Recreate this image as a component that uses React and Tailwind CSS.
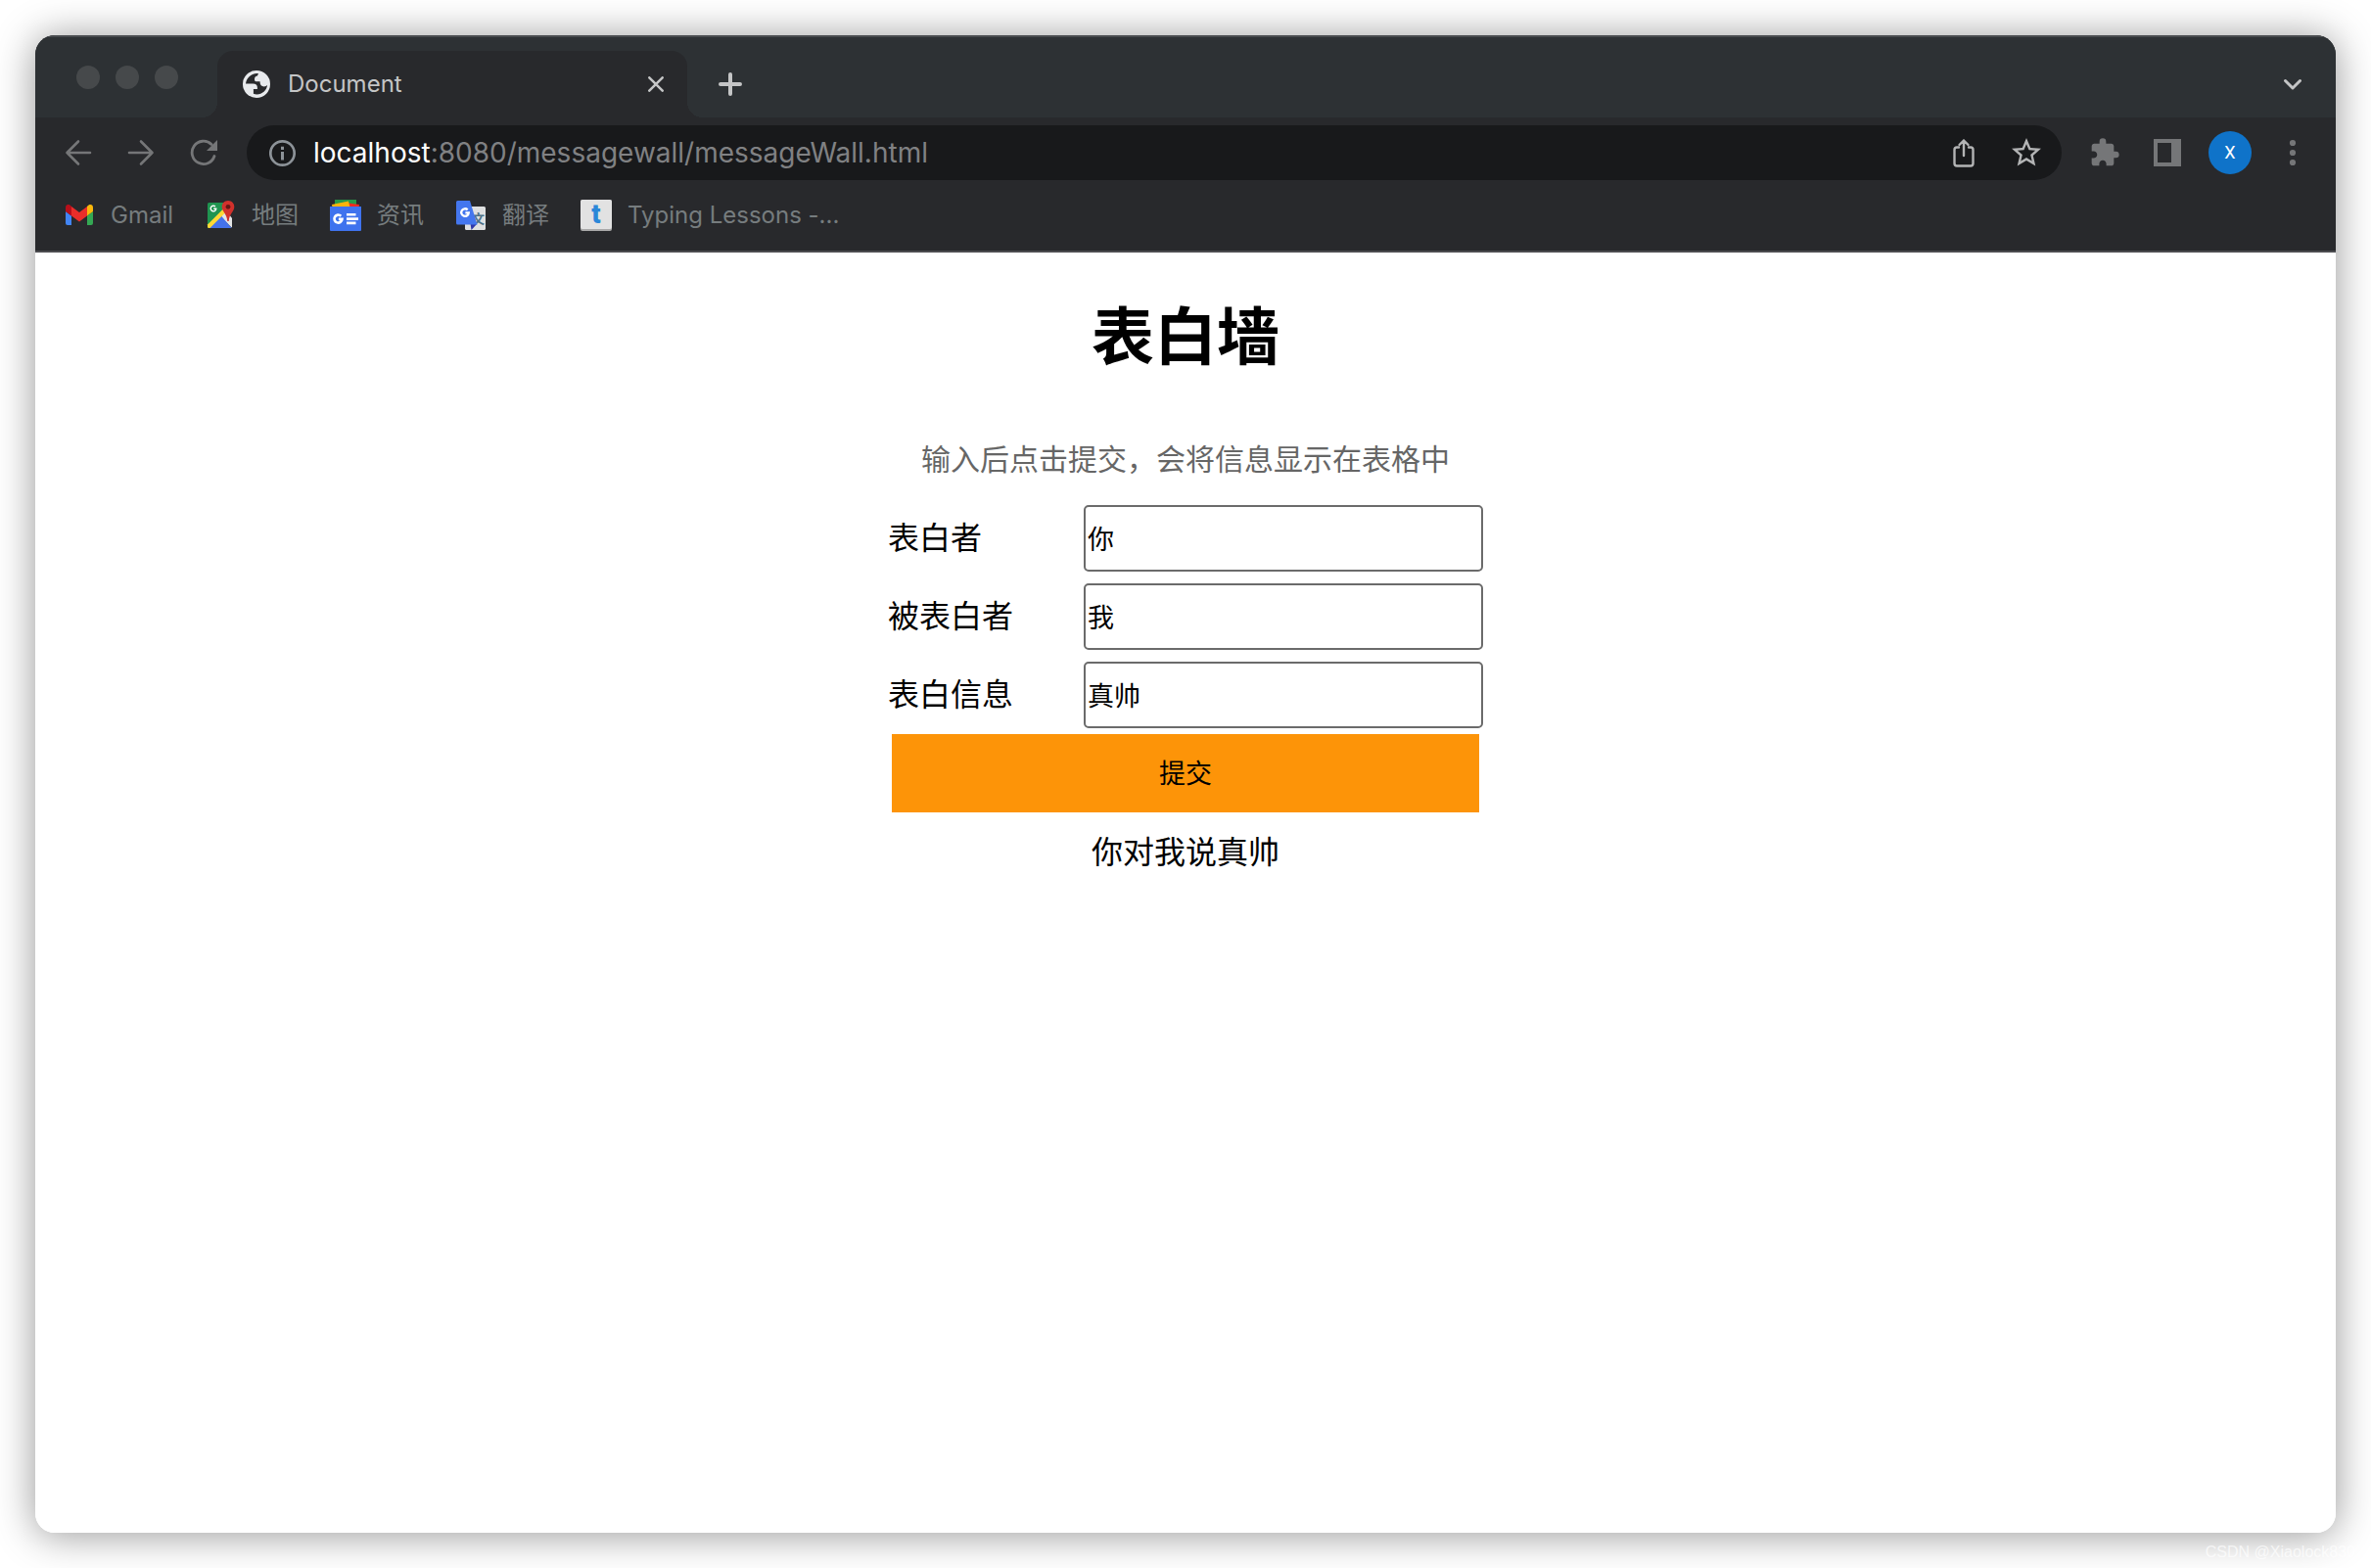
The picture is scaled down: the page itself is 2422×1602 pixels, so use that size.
import { MdExtension, MdStarBorder } from "react-icons/md";

const strokeProps = { fill: "none", stroke: "currentColor", strokeLinecap: "round", strokeLinejoin: "round" };

function GlobeIcon() {
  return (
    <svg className="size-7 shrink-0" viewBox="0 0 28 28" aria-hidden="true">
      <circle cx="14" cy="14" r="14" fill="#e8eaed" />
      <path
        fill="#28292c"
        d="M15.9 3.1C9.8 2.5 3.6 7 3 13.6h7.6c2.700 0 4.300 1.500 4.300 3.900v1.400h-4v4.900c1 .5 2.300.7 3.500.7 5.400 0 10.100-4.100 10.700-9.700-.8 1-2 1.600-3.400 1.600-2.600 0-4.100-1.700-4.100-4.300v-.8h-4.300c-.9-.4-1.300-1.300-1.300-2.400 0-2 1.200-3.100 3-3.300.3-.9.600-1.700.9-2.500z"
      />
    </svg>
  );
}

function GoogleG({ x, y, r, w }) {
  return (
    <path
      transform={`translate(${x} ${y}) scale(${r})`}
      d="M.7-.7A1 1 0 1 0 1 .1H.1"
      fill="none"
      stroke="#fff"
      strokeWidth={w}
    />
  );
}

function GmailIcon() {
  return (
    <svg className="size-8" viewBox="0 0 32 32" aria-hidden="true">
      <path fill="#4285f4" d="M2 12l6 4.500V26H4a2 2 0 0 1-2-2z" />
      <path fill="#34a853" d="M30 12l-6 4.500V26h4a2 2 0 0 0 2-2z" />
      <path fill="#ea2d2a" d="M8 7l8 6 8-6v9.500l-8 6-8-6z" />
      <path fill="#b80f1a" d="M2 8c0-3 3.300-4.300 6-1v9.500L2 12z" />
      <path fill="#fbb80b" d="M30 8c0-3-3.300-4.300-6-1v9.500l6-4.500z" />
    </svg>
  );
}

function MapsIcon() {
  return (
    <svg className="size-8" viewBox="0 0 32 32" aria-hidden="true">
      <path fill="#1f9450" d="M4.500 3H20l6 8-9 9L4 29a1.500 1.500 0 0 1-1-1.500v-23A1.500 1.500 0 0 1 4.500 3z" />
      <path fill="#e3e4e6" d="M16 17l6-6 6 8v8.500a1.500 1.500 0 0 1-.5 1z" />
      <path fill="#4472ec" d="M4 29l13-12.500L27.500 29z" />
      <path fill="#fdd835" d="M3 25.500L19 9.500l2 4L5.500 29h-1A1.500 1.500 0 0 1 3 27.500z" />
      <GoogleG x={9} y={9} r={2.8} w={0.5} />
      <path fill="#d1312c" d="M24 1c3.600 0 6.300 2.800 6.300 6.300 0 5.200-5 6.700-5.600 14.700h-1.400c-.6-8-5.600-9.500-5.600-14.700C17.700 3.800 20.400 1 24 1z" />
      <circle cx="24" cy="7.300" r="2.400" fill="#651714" />
    </svg>
  );
}

function NewsIcon() {
  return (
    <svg className="size-8" viewBox="0 0 32 32" aria-hidden="true">
      <path fill="#279a48" d="M5 0h22v10H5z" />
      <path fill="#f02a20" d="M15 3l15 2-1 6H15z" />
      <path fill="#fbb40b" d="M2 5l17-3.500L21 10H3z" />
      <path fill="#3f73ee" d="M0 7h32v24a1 1 0 0 1-1 1H1a1 1 0 0 1-1-1z" />
      <GoogleG x={8.5} y={19.500} r={4} w={0.65} />
      <path stroke="#fff" strokeWidth="2.600" d="M17 15.300h9.500M17 19.600h12M17 23.900h9.500" />
    </svg>
  );
}

function TranslateIcon() {
  return (
    <svg className="size-8" viewBox="0 0 32 32" aria-hidden="true">
      <rect x="10" y="7" width="21" height="24" rx="1.500" fill="#dfe0e1" />
      <text x="17" y="24" fontSize="13" fontWeight="700" fill="#4d7187" fontFamily="Noto Sans CJK SC, sans-serif">文</text>
      <path fill="#3038a8" d="M15.500 24.500h7L16.500 31z" />
      <path fill="#4476ee" d="M2.500 1H15l7.500 24.500h-20A1.500 1.500 0 0 1 1 24V2.500A1.500 1.500 0 0 1 2.500 1z" />
      <GoogleG x={10} y={13} r={3.800} w={0.6} />
    </svg>
  );
}

function TypingIcon() {
  return (
    <svg className="size-8 overflow-visible" viewBox="0 0 32 32" aria-hidden="true">
      <rect width="32" height="32" rx="2" fill="#a9a9a9" />
      <rect width="32" height="30" rx="2" fill="#e2e2e2" />
      <text x="16" y="24" textAnchor="middle" fontSize="27" fontWeight="900" fill="#2b87d8" fontFamily="Roboto, sans-serif">t</text>
    </svg>
  );
}

const bookmarks = [
  { label: "Gmail", Icon: GmailIcon },
  { label: "地图", Icon: MapsIcon },
  { label: "资讯", Icon: NewsIcon },
  { label: "翻译", Icon: TranslateIcon },
  { label: "Typing Lessons -...", Icon: TypingIcon },
];

const fields = [
  { id: "from", label: "表白者", value: "你" },
  { id: "to", label: "被表白者", value: "我" },
  { id: "message", label: "表白信息", value: "真帅" },
];

function ToolButton({ label, children }) {
  return (
    <button type="button" aria-label={label} className="flex h-14 w-16 shrink-0 items-center justify-center">
      {children}
    </button>
  );
}

function TabStrip() {
  return (
    <div className="flex items-center border-t-2 border-[#484b4e] bg-[#2d3134] pt-3.5 text-[#c4c5c6]">
      <div className="flex gap-4 pb-3.5 pl-[42px]">
        <span className="size-6 rounded-full bg-[#46494b]" />
        <span className="size-6 rounded-full bg-[#46494b]" />
        <span className="size-6 rounded-full bg-[#46494b]" />
      </div>
      <div className="relative ml-10 flex h-[68px] w-[480px] items-center rounded-t-2xl bg-[#28292c] pr-3 pl-[26px]">
        <span className="absolute bottom-0 -left-4 size-4 bg-[radial-gradient(circle_at_0_0,transparent_16px,#28292c_16px)]" />
        <span className="absolute -right-4 bottom-0 size-4 bg-[radial-gradient(circle_at_100%_0,transparent_16px,#28292c_16px)]" />
        <GlobeIcon />
        <span className="ml-[18px] flex-1 text-2xl">Document</span>
        <button type="button" aria-label="Close tab" className="flex size-10 items-center justify-center">
          <svg className="size-4" viewBox="0 0 16 16" {...strokeProps} strokeWidth="2.500">
            <path d="M1.300 1.300l13.400 13.400M14.700 1.300L1.300 14.700" />
          </svg>
        </button>
      </div>
      <button type="button" aria-label="New tab" className="ml-5 flex size-12 items-center justify-center">
        <svg className="size-6" viewBox="0 0 24 24" {...strokeProps} strokeWidth="4">
          <path d="M12 2v20M2 12h20" />
        </svg>
      </button>
      <div className="mr-3 ml-auto">
        <ToolButton label="Search tabs">
          <svg className="h-3 w-5" viewBox="0 0 20 12" {...strokeProps} strokeWidth="3">
            <path d="M2.500 2.500L10 10l7.500-7.500" />
          </svg>
        </ToolButton>
      </div>
    </div>
  );
}

function Toolbar() {
  return (
    <div className="flex items-center px-3 py-2 text-[#757678]">
      <ToolButton label="Back">
        <svg className="size-7" viewBox="0 0 28 28" {...strokeProps} strokeWidth="2.600">
          <path d="M26 14H2.500M14 2.500L2.500 14 14 25.500" />
        </svg>
      </ToolButton>
      <ToolButton label="Forward">
        <svg className="size-7" viewBox="0 0 28 28" {...strokeProps} strokeWidth="2.600">
          <path d="M2 14h23.500M14 2.500L25.500 14 14 25.500" />
        </svg>
      </ToolButton>
      <ToolButton label="Reload">
        <svg className="size-7" viewBox="0 0 28 28" aria-hidden="true">
          <path d="M25 17.500A11.700 11.700 0 1 1 22 5.500" fill="none" stroke="currentColor" strokeWidth="2.800" strokeLinecap="round" />
          <path d="M28 1v11H17z" fill="currentColor" />
        </svg>
      </ToolButton>
      <div className="mx-3 flex h-14 min-w-0 flex-1 items-center rounded-full bg-[#18191b] pr-1 pl-5 text-[#b3b4b5]">
        <svg className="size-8 shrink-0 text-[#8c9298]" viewBox="0 0 32 32" aria-hidden="true">
          <circle cx="16.500" cy="16.500" r="12.200" fill="none" stroke="currentColor" strokeWidth="2.700" />
          <path d="M15 9.700h3V13h-3zM15 15h3v8.500h-3z" fill="currentColor" />
        </svg>
        <div
          role="textbox"
          aria-label="Address"
          contentEditable
          suppressContentEditableWarning
          spellCheck={false}
          className="ml-4 min-w-0 flex-1 text-[28px] leading-9 whitespace-nowrap text-[#808183] outline-none"
        >
          <span className="text-white">localhost</span>:8080/messagewall/messageWall.html
        </div>
        <ToolButton label="Share">
          <svg className="size-8" viewBox="0 0 32 32" {...strokeProps} strokeWidth="2.400">
            <path d="M11 10.500H9A2.500 2.500 0 0 0 6.500 13v14A2.500 2.500 0 0 0 9 29.500h14a2.500 2.500 0 0 0 2.500-2.500V13a2.500 2.500 0 0 0-2.500-2.500h-2M16 19V3.500M11.500 8L16 3.500 20.500 8" />
          </svg>
        </ToolButton>
        <ToolButton label="Bookmark this page">
          <MdStarBorder className="size-9" />
        </ToolButton>
      </div>
      <ToolButton label="Extensions">
        <MdExtension className="size-8" />
      </ToolButton>
      <ToolButton label="Side panel">
        <svg className="size-7" viewBox="0 0 28 28" aria-hidden="true">
          <path fillRule="evenodd" fill="currentColor" d="M0 0h28v28H0zM4 4v20h14V4z" />
        </svg>
      </ToolButton>
      <ToolButton label="Profile">
        <span className="flex size-11 items-center justify-center rounded-full bg-[#0f73c9] font-[Roboto,sans-serif] text-lg text-white">X</span>
      </ToolButton>
      <ToolButton label="Menu">
        <svg className="size-7" viewBox="0 0 28 28" fill="currentColor" aria-hidden="true">
          <circle cx="14" cy="4" r="3.100" />
          <circle cx="14" cy="14" r="3.100" />
          <circle cx="14" cy="24" r="3.100" />
        </svg>
      </ToolButton>
    </div>
  );
}

function BookmarkBar() {
  return (
    <nav aria-label="Bookmarks" className="flex gap-8 border-b-2 border-[#4c4c50] px-[29px] pt-3 pb-5 text-[#767c7e]">
      {bookmarks.map(({ label, Icon }) => (
        <a key={label} href="#" className="flex items-center gap-4 text-2xl">
          <Icon />
          {label}
        </a>
      ))}
    </nav>
  );
}

function MessageWall() {
  return (
    <main className="flex flex-1 flex-col items-center bg-white font-['Liberation_Sans','Noto_Sans_CJK_SC',sans-serif] text-[32px] leading-[80px] text-black">
      <h1 className="mt-11 mb-[42px] text-[64px] leading-[86px] font-bold">表白墙</h1>
      <p className="text-[30px] leading-[80px] text-[#666]">输入后点击提交，会将信息显示在表格中</p>
      <form className="flex w-full flex-col items-center" onSubmit={(e) => e.preventDefault()}>
        {fields.map(({ id, label, value }) => (
          <div key={id} className="flex h-20 items-center">
            <label htmlFor={id} className="w-[200px]">{label}</label>
            <input
              id={id}
              type="text"
              defaultValue={value}
              className="h-[68px] w-[408px] rounded-[5px] border-2 border-[#6b6b6b] px-0.5 pb-0.5 text-[27px] leading-9"
            />
          </div>
        ))}
        <button type="submit" className="h-20 w-[600px] bg-[#fd9408] pt-0.5 text-[27px] leading-9">提交</button>
      </form>
      <output className="block pt-px">你对我说真帅</output>
    </main>
  );
}

export default function App() {
  return (
    <div className="relative flex min-h-screen flex-col bg-white p-9 font-[Inter,'Noto_Sans_CJK_SC',sans-serif]">
      <div className="flex flex-1 flex-col overflow-hidden rounded-[20px] shadow-[0_2px_40px_rgba(0,0,0,0.42)]">
        <header className="bg-[#28292c]">
          <TabStrip />
          <Toolbar />
          <BookmarkBar />
        </header>
        <MessageWall />
      </div>
      <span className="absolute right-4 bottom-1 font-['Liberation_Sans',sans-serif] text-base leading-6 text-white/70">CSDN @Xiaolock830</span>
    </div>
  );
}
